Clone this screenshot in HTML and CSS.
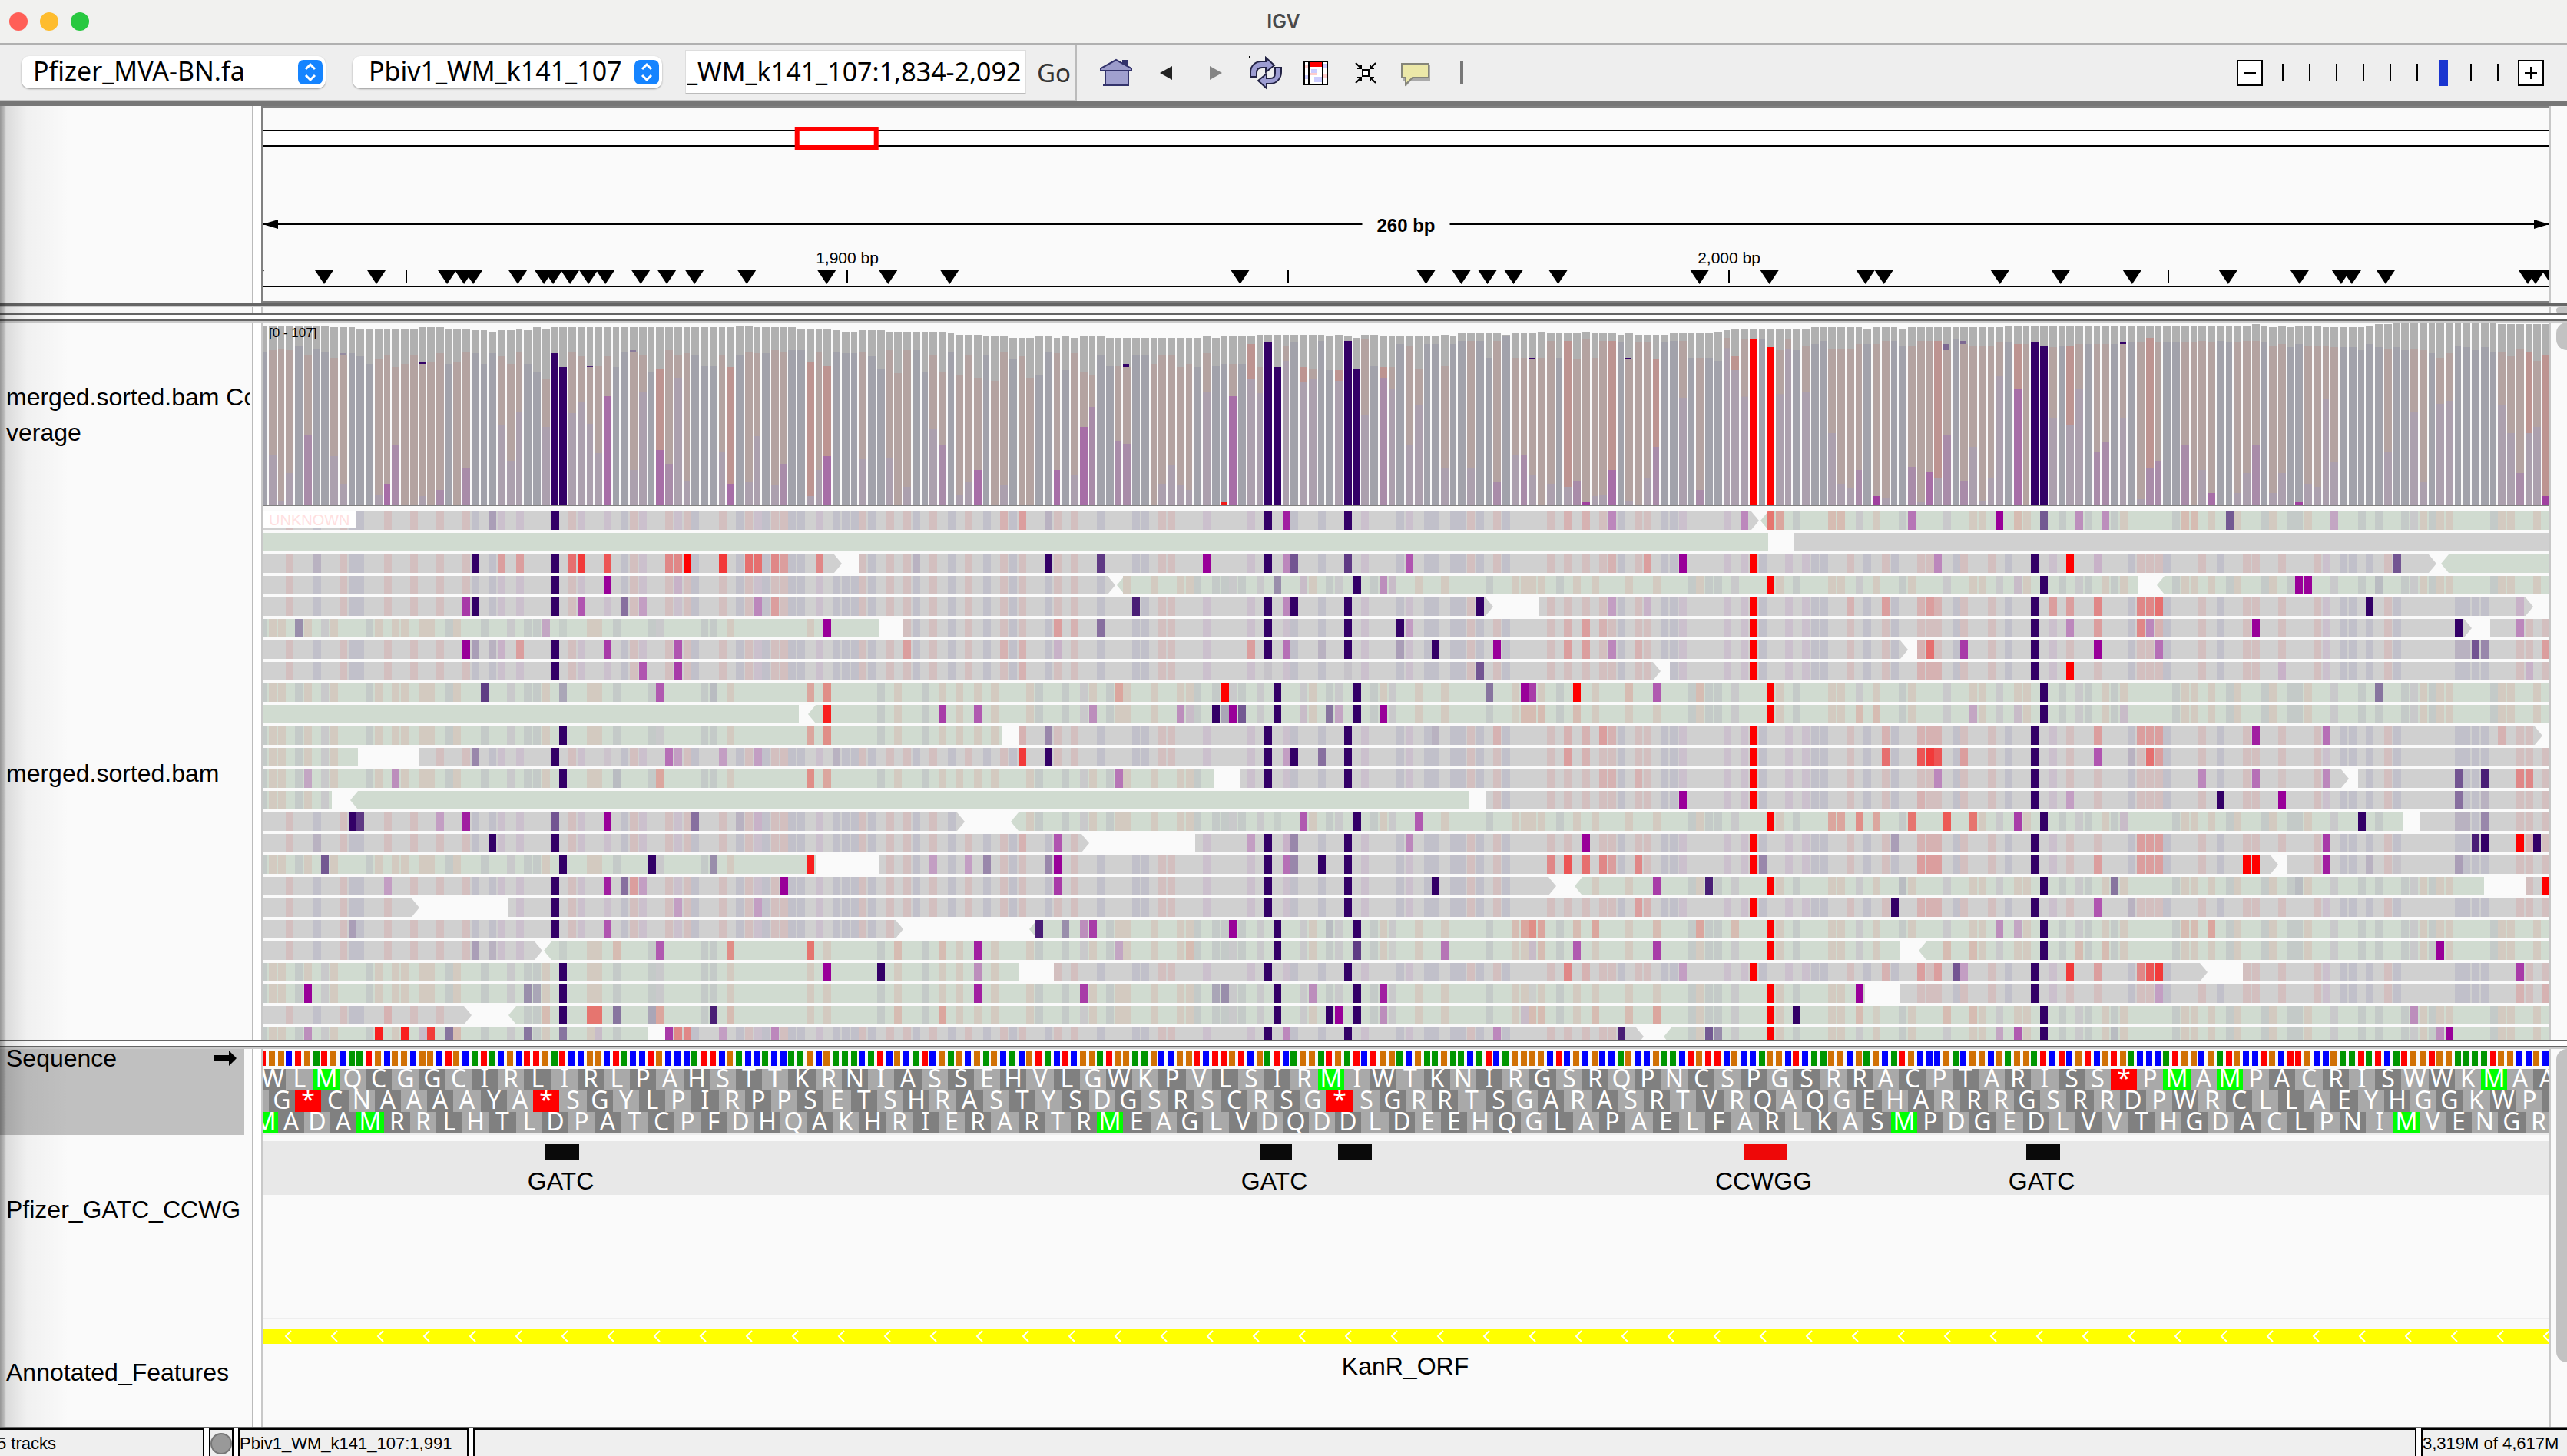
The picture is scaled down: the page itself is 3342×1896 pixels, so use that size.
FILE: index.html
```html
<!DOCTYPE html>
<html lang="en">
<head>
<meta charset="utf-8">
<title>IGV</title>
<link rel="stylesheet" href="styles.css">
</head>
<body>
<header class="titlebar">
  <div class="lights"><span class="light red"></span><span class="light amber"></span><span class="light green"></span></div>
  <h1 class="title">IGV</h1>
</header>

<nav class="toolbar">
  <div class="locus-bar">
    <div class="picker genome">
      <select aria-label="Genome"><option>Pfizer_MVA-BN.fa</option></select>
      <svg class="stepper" viewBox="0 0 32 32"><rect width="32" height="32" rx="7" fill="#1584ff"/><path d="M10 12l6-6 6 6M10 20l6 6 6-6" fill="none" stroke="#fff" stroke-width="3"/></svg>
    </div>
    <div class="picker chromosome">
      <select aria-label="Chromosome"><option>Pbiv1_WM_k141_107</option></select>
      <svg class="stepper" viewBox="0 0 32 32"><rect width="32" height="32" rx="7" fill="#1584ff"/><path d="M10 12l6-6 6 6M10 20l6 6 6-6" fill="none" stroke="#fff" stroke-width="3"/></svg>
    </div>
    <input class="locus" id="locus" type="text" aria-label="Locus" value="Pbiv1_WM_k141_107:1,834-2,092">
    <button class="go" type="button">Go</button>
  </div>
  <div class="tools">
    <button class="tool" type="button" aria-label="Home"><svg width="44" height="44" viewBox="0 0 44 44"><path d="M30 5h7v11h-7z" fill="#33336b"/><path d="M8 19h30v19H8z" fill="#a0a0cf" stroke="#33336b" stroke-width="2"/><path d="M22 5L2 16v3h40v-3z" fill="#9c9cca" stroke="#33336b" stroke-width="2"/><path d="M5 38h34" stroke="#33336b" stroke-width="2"/></svg></button>
    <button class="tool" type="button" aria-label="Back"><svg width="44" height="44" viewBox="0 0 44 44"><path d="M14 22l16-9v18z" fill="#222"/></svg></button>
    <button class="tool" type="button" aria-label="Forward"><svg width="44" height="44" viewBox="0 0 44 44"><path d="M30 22l-16-9v18z" fill="#858585"/></svg></button>
    <button class="tool" type="button" aria-label="Refresh"><svg width="44" height="44" viewBox="0 0 44 44"><g fill="#9d9dd2" stroke="#222244" stroke-width="2"><path d="M2 27v-6C2 12 9 7 16 7h6V2l11 10-11 9v-6h-5c-5 0-7 3-7 7v5z"/><path d="M42 15v6c0 9-7 15-14 15h-5v6L12 32l11-9v6h5c4 0 6-3 6-7v-7z"/></g><path d="M0 0h2v2H0z"/></svg></button>
    <button class="tool" type="button" aria-label="Region of interest"><svg width="44" height="44" viewBox="0 0 44 44"><path d="M7 7h30v30H7z" fill="#fff"/><path d="M8 12h5v4H8zM15 22h8v3h-8zM31 24h5v4h-5z" fill="#fcc"/><path d="M16 17h8v5h-8zM20 27h10v7H20zM31 10h5v5h-5zM8 25h5v5H8z" fill="#ccf"/><path d="M14 8h16v6H14z" fill="red"/><path d="M7 7h30v30H7zM13 7v30M31 7v30" fill="none" stroke="#000" stroke-width="2"/></svg></button>
    <button class="tool" type="button" aria-label="Fit to window"><svg width="44" height="44" viewBox="0 0 44 44"><g fill="none" stroke="#000" stroke-width="2"><path d="M18 18h8v8h-8z" fill="#fff"/><path d="M9 9l7 7m0-5v5h-5M35 9l-7 7m0-5v5h5M9 35l7-7m0 5v-5h-5M35 35l-7-7m0 5v-5h5"/></g></svg></button>
    <button class="tool" type="button" aria-label="Popup text"><svg width="44" height="44" viewBox="0 0 44 44"><path d="M6 12h35v20H16l-7 8v-8H6z" fill="#aaa"/><path d="M4 10h35v18H18l-9 9v-9H4z" fill="#ece8a8" stroke="#85857a" stroke-width="2"/></svg></button>
    <span class="tool-rule"></span>
  </div>
  <div class="zoomer">
    <button class="zoom-btn" type="button" aria-label="Zoom out"><svg width="34" height="34" viewBox="0 0 34 34"><path d="M1 1h32v32H1z" fill="#fff" stroke="#000" stroke-width="2"/><path d="M9 17h16" stroke="#000" stroke-width="2"/></svg></button>
    <input class="zoom-range" type="range" min="0" max="8" value="6" aria-label="Zoom level">
    <button class="zoom-btn" type="button" aria-label="Zoom in"><svg width="34" height="34" viewBox="0 0 34 34"><path d="M1 1h32v32H1z" fill="#fff" stroke="#000" stroke-width="2"/><path d="M9 17h16M17 9v16" stroke="#000" stroke-width="2"/></svg></button>
  </div>
</nav>

<main class="browser">
  <section class="panel ruler-panel">
    <div class="names"></div><div class="gutter"></div>
    <svg class="track" id="ruler"></svg>
    <div class="scroll"></div>
  </section>
  <div class="sliver"><div class="names"></div><div class="gutter"></div><div></div><div class="scroll"><span class="thumb"></span></div></div>
  <div class="split"></div>
  <section class="panel data-panel">
    <div class="names">
      <div class="name coverage-name">merged.sorted.bam Co<br>verage</div>
      <div class="name reads-name">merged.sorted.bam</div>
    </div>
    <div class="gutter"></div>
    <div class="tracks">
      <svg class="track coverage" id="coverage"></svg>
      <svg class="track reads" id="reads"></svg>
    </div>
    <div class="scroll"><span class="thumb"></span></div>
  </section>
  <div class="split"></div>
  <section class="panel feature-panel">
    <div class="names">
      <div class="name sequence-name">Sequence <svg width="30" height="20" viewBox="0 0 30 20"><path d="M0 6h20V0l10 10-10 10v-6H0z"/></svg></div>
      <div class="name motif-name">Pfizer_GATC_CCWG</div>
      <div class="name orf-name">Annotated_Features</div>
    </div>
    <div class="gutter"></div>
    <div class="tracks">
      <svg class="track sequence" id="sequence"></svg>
      <svg class="track motifs" id="motifs"></svg>
      <svg class="track orf" id="orf"></svg>
    </div>
    <div class="scroll"><span class="thumb"></span></div>
  </section>
  <div class="edge-shade"></div>
</main>

<footer class="status">
  <div class="cell count">5 tracks</div>
  <div class="cell lamp"><span></span></div>
  <div class="cell position">Pbiv1_WM_k141_107:1,991</div>
  <div class="cell message"></div>
  <div class="cell memory">3,319M of 4,617M</div>
</footer>
<script src="tracks.js"></script>
</body>
</html>
```
FILE: styles.css
```css
* { box-sizing: border-box; }
html, body { height: 100%; }
body {
  margin: 0;
  display: flex;
  flex-direction: column;
  overflow: hidden;
  background: #fafafa;
  color: #000;
  font-family: "Liberation Sans", Arial, sans-serif;
}
button { border: 0; padding: 0; background: none; color: inherit; font: inherit; }

.titlebar {
  flex: none;
  height: 58px;
  display: grid;
  grid-template-columns: 1fr auto 1fr;
  align-items: center;
  background: #f1f1ef;
  border-bottom: 2px solid #b0b0b0;
}
.lights { display: flex; gap: 16px; padding-left: 12px; }
.light { width: 24px; height: 24px; border-radius: 50%; }
.red { background: #ff5f57; }
.amber { background: #febc2e; }
.green { background: #28c840; }
.title { margin: 0; font: 600 25px Inter, sans-serif; color: #4a4a4a; }

.toolbar {
  flex: none;
  height: 80px;
  display: flex;
  background: #eee;
  border-bottom: 6px solid #777;
  font-family: "Noto Sans", sans-serif;
  font-size: 34px;
}
.locus-bar {
  display: flex;
  align-items: center;
  width: 1402px;
  padding-left: 28px;
  border-right: 2px solid #bbb;
  border-bottom: 2px solid #c4c4c4;
}
.picker {
  position: relative;
  display: flex;
  align-items: center;
  height: 42px;
  border-radius: 10px;
  background: #fff;
  box-shadow: 0 1px 2px #999;
}
.picker select {
  flex: none;
  width: 100%;
  height: 56px;
  margin-bottom: 4px;
  appearance: none;
  border: 0;
  background: none;
  font: inherit;
  color: #000;
}
.genome { width: 396px; margin-right: 35px; }
.genome select { padding: 0 0 0 15px; }
.chromosome { width: 403px; margin-right: 30px; }
.chromosome select { padding: 0 0 0 21px; }
.stepper { position: absolute; right: 4px; top: 5px; width: 32px; height: 32px; pointer-events: none; }
.locus {
  width: 444px;
  height: 58px;
  border: 1px solid #ddd;
  border-bottom: 2px solid #bbb;
  padding: 0 6px 2px 2px;
  background: #fff;
  font: inherit;
  color: #000;
}
.go { margin-left: 14px; color: #333; font-size: 33px; }
.tools { display: flex; align-items: center; gap: 21px; padding-left: 29px; }
.tool { width: 44px; height: 44px; }
.tool svg { display: block; }
.tool-rule { width: 4px; height: 30px; margin-left: 15px; background: #777; }
.zoomer { display: flex; align-items: center; gap: 20px; margin-left: auto; padding-right: 30px; }
.zoom-btn { width: 34px; height: 34px; }
.zoom-btn svg { display: block; }
.zoom-range {
  appearance: none;
  width: 290px;
  height: 34px;
  margin: 0 2px 0 0;
  background: repeating-linear-gradient(90deg, #000 0 2px, transparent 2px 35px) 5px 5px / 282px 22px no-repeat;
}
.zoom-range::-webkit-slider-thumb { appearance: none; width: 12px; height: 34px; background: #1a35d0; }

.browser { position: relative; flex: none; background: #fafafa; }
.panel, .sliver { display: grid; grid-template-columns: 328px 14px 1fr 23px; }
.gutter { background: #fff; border-left: 1px solid #bbb; border-right: 2px solid #c8c8c8; }
.scroll { border-left: 2px solid #c8c8c8; padding-left: 7px; overflow: hidden; }
.thumb { display: block; width: 28px; border-radius: 14px; background: #c2c2c2; }
.track { display: block; width: 100%; }
.ruler-panel { border-bottom: 4px solid #666; }
.ruler-panel .gutter { border-right-color: #808080; }
.ruler-panel .track { height: 256px; border-top: 2px solid #808080; border-bottom: 2px solid #808080; }
.sliver { height: 10px; border-top: 2px solid #ccc; }
.sliver .thumb { height: 8px; }
.split { height: 12px; border-top: 2px solid #666; border-bottom: 2px solid #ccc; box-shadow: inset 0 -2px #666; background: #fff; }
.data-panel .coverage { height: 239px; border-bottom: 2px solid #808080; }
.data-panel .reads { height: 695px; }
.data-panel .thumb { height: 36px; }
.feature-panel .thumb { height: 408px; }
.sequence { height: 112px; }
.motifs { height: 238px; }
.orf { height: 142px; }
.names { overflow: hidden; }
.name { width: 318px; padding-left: 8px; font-size: 32px; line-height: 46px; overflow: hidden; white-space: nowrap; }
.coverage-name { width: 326px; height: 239px; padding-top: 74px; }
.reads-name { height: 695px; padding-top: 325px; }
.sequence-name { height: 112px; display: flex; justify-content: space-between; padding-right: 10px; background: #c0c0c0; line-height: 24px; overflow: visible; }
.sequence-name svg { margin-top: 2px; }
.motif-name { height: 238px; padding-top: 74px; }
.orf-name { height: 142px; padding-top: 48px; }
.edge-shade {
  position: absolute;
  inset: 0 auto 0 0;
  width: 90px;
  background: linear-gradient(90deg, #0006 0, #0004 5px, #00000020 8px, #0000000a 35px, #0000 90px);
  pointer-events: none;
}

.status {
  flex: 1;
  display: flex;
  gap: 6px;
  border-top: 2px solid #666;
  background: #fff;
  font-size: 22px;
  line-height: 36px;
  white-space: nowrap;
}
.cell { border: 2px solid #000; border-bottom: 0; background: #efefef; }
.count { width: 266px; border-left: 0; text-indent: -4px; }
.lamp { width: 32px; padding: 4px 0; }
.lamp span { display: block; height: 28px; border-radius: 14px; background: #999; border: 2px solid #777; }
.position { width: 300px; }
.message { flex: 1; }
.memory { width: 190px; border-right: 0; }

.ruler-label { font-size: 21px; text-anchor: middle; }
.span-label { font-size: 24px; font-weight: bold; text-anchor: middle; }
.range-label { font-size: 17px; }
.unknown-label { font-size: 20px; fill: #ffe0e0; }
.amino { font: 32px "Noto Sans", sans-serif; fill: #fff; text-anchor: middle; }
.feature-label { font-size: 32px; text-anchor: middle; }
```
FILE: tracks.js
```js
const BASES = 259.46;

// Two bases before the window, then the 260 shown, then two after.
const SEQ = "CA" +
  "TGGCTGATGCAATGCGGCGGCTGCATACGCTTGATCCGGCTACCTGCCCATTCGACCACCAAGCGAAACATCGCATCGAGCGAGCACGTACTCGGATGGAAGCCG" +
  "GTCTTGTCGATCAGGATGATCTGGACGAAGAACATCAGGGGCTCGCGCCAGCCGAACTGTTCGCCAGGCTCAAGGCGAGCATGCCCGACGGCGAGGATCTCGTCG" +
  "TGACCCATGGCGATGCCTGCTTGCCGAATATCATGGTGGAAAATGGCCGC" + "TT";
const base = k => SEQ[k + 2];

const AMINO = "FFLLSSSSYY**CC*WLLLLPPPPHHQQRRRRIIIMTTTTNNKKSSRRVVVVAAAADDEEGGGG";
const translate = c => AMINO["TCAG".indexOf(c[0]) * 16 + "TCAG".indexOf(c[1]) * 4 + "TCAG".indexOf(c[2])];

// [first column, empty space above the bar]
const DEPTH = [[0,2],[8,3],[11,4],[18,3],[21,4],[24,5],[26,6],[27,5],[29,4],[30,5],[31,3],[32,4],[33,3],[54,2],[56,3],[61,4],[65,5],[66,6],[68,5],[71,6],[78,7],[79,8],[82,9],[85,10],[88,9],[90,10],[91,9],[92,10],[93,9],[96,10],[107,9],[108,10],[109,9],[113,8],[121,9],[122,8],[123,9],[124,10],[125,8],[127,9],[134,8],[135,9],[136,7],[141,8],[142,7],[145,6],[146,7],[150,6],[151,7],[154,8],[155,7],[156,8],[160,7],[165,6],[166,5],[167,4],[176,3],[182,4],[183,3],[186,4],[187,3],[198,2],[226,1],[227,2],[228,3],[229,2],[230,3],[231,2],[234,3],[239,2],[240,1],[242,0],[254,1]];

const CALLED = [174,168,162,168,150,186,162,174,198,186,180,192,222,204,186,234,222,186,222,216,180,222,216,174,180,222,180,192,222,174,222,252,282,180,234,174,192,234,228,192,234,174,174,186,252,240,168,186,180,186,228,228,186,234,186,174,180,180,168,174,168,168,216,174,228,174,180,180,174,192,240,168,258,168,168,252,186,252,174,264,186,276,186,288,174,204,
192,276,264,174,180,246,180,252,264,186,228,228,234,186,186,222,186,186,234,222,234,180,228,222,222,222,144,234,138,234,150,138,234,240,132,246,246,132,240,126,228,234,234,144,150,240,144,144,228,144,132,132,132,198,132,114,198,198,204,198,132,198,132,204,126,198,132,132,138,204,138,138,204,138,132,132,198,198,198,210,120,192,126,126,126,156,168,126,
168,150,144,132,162,162,162,144,144,144,132,132,150,150,132,132,132,168,126,144,150,150,150,138,138,144,144,138,150,156,150,150,144,144,144,144,144,144,138,138,120,138,138,138,138,138,132,138,132,138,138,132,132,138,150,144,156,144,150,150,150,156,156,156,168,144,156,162,156,168,162,168,180,198,180,150,156,168,156,174,174,192,162,174,210,186];

const SECOND = "1:576 2:756 3:648 5:498m 8:582 9:690 13:732 14:690s 15:540m 18:738 20:714m 23:630m 27:462 28:600 29:408 32:468 35:414 36:372 37:456 38:570 39:348s 42:636 43:330 45:558s 46:612m 47:276 48:680 52:564 53:690s 55:684 56:504 58:696 59:612m 62:738 63:636 64:582s 68:594 71:588 73:702 76:474 77:540m 79:732 80:684 81:636s 84:696 " +
"90:636s 92:654 93:468s 94:390m 97:522m 98:534m 102:690 103:618 104:696 105:714 107:330 110:348s 112:282 113:336 116:210 118:294 119:282 122:288 125:420 127:276m 128:318 130:540 131:384 134:630 137:630 140:684m 142:576 143:576m 144:654 146:690 148:702 149:678m 150:762x 109:762r 151:738 152:732 153:636s 155:756 157:666 158:546m 161:354 163:714m 166:160 167:246 168:350 172:340 173:165 " +
"175:330 178:492 179:690 180:708 181:636m 183:738x 184:744 187:624m 188:762 189:642s 190:666 191:498m 193:678m 194:546 195:756 196:666 197:270 199:318s 203:432 205:462 206:318 208:564m 209:528m 211:432 213:750 214:630m 215:600m 218:540m 220:636 221:726s 224:726 225:648 226:540m 228:726 229:648 231:762x 232:690 233:702 234:360 235:606 241:564 244:408 245:684 247:378 248:366 254:384 255:492 256:648m 257:492 258:468 259:738x";
const TINT = { "": "#aca0ae", m: "#a98ca9", s: "#a76ea7", x: "#a040a0", r: "#f01818" };
const WARM = new Set([45, 53, 62, 64, 112, 118, 122, 127, 148, 153, 158, 167, 190, 199, 205, 214, 257, 259]);
const CAPS = [[18,216,1,1],[37,228,1,.8],[98,222,2,1],[144,198,1,1],[155,198,1,1],[191,144,4,.4],[193,132,2,.4],[211,138,1,1],[42,168,1,.3],[9,180,1,.2]];

// Reads: strand, start, end, "a" for an arrow tip, "n" for no calls; then column, probability class, strength.
const READS = [
["+0,170,a -170.3,260,a", "26P3 84R2 86R3 89P2 116M8 148R2 150R2 153M4 168M4 171R5 172R3 187M5 178R2 179R2 197M9 199R2 202P6 206M4 209M4 218R2 219R2 223P6 235M3"],
["-0,171.2,n +174.1,260,n", ""],
["+0,66,a +68.1,247,a -247.4,260,an", "6P2 24P9 27R3 29R3 35R5 36R7 39R6 46R4 47R4 48R9 52R7 55R5 56R5 58R4 59R3 63R4 74P2 89P9 95P7 107M9 116M4 117P6 123P7 130M6 153R2 157R3 161M9 190M4 205R9 208M2 242P6"],
["+0,97.1,a -97.2,213.1,a -215.3,260,a", "39M9 47M2 115P4 118M2 127M4 128M2 199M2 231M9 232M9 240P2"],
["+0,140,a +145.2,258,a", "23M7 24P9 36M6 41P5 43M3 56M4 58R3 99P8 116M4 117P9 138P9 153M3 157M2 180R2 184R3 188R2 189R3 190R2 203R3 205R3 208R4 213R4 214R4 215R5 239P9 256M2"],
["-0,70.2 +73,251,a +253.1,260", "4P4 32M3 34P1 64M9 90R3 92R2 95P5 129P9 130M3 148R2 150R3 152R2 205M4 208R3 213R4 214M4 215R2 226M9 249P9 256M4"],
["+0,187,a +188,260", "23M9 24P3 26P2 27M2 29R3 39M7 47M6 73R3 84R2 86R2 90M2 112R3 116M5 120P2 129P3 133P9 140M9 148R3 150R3 153M4 156R2 188R2 189R5 193M7 208M9 215M5 249P2 250P2 251P6 252P4 259R3"],
["+0,159,a +160,260", "43M6 47M7 86R2 114P1 123P1 138P6 188R2 189R2 190R2 205R9 229M2 257M2"],
["-0,260", "25P7 34P3 45M6 51P2 62R3 64R4 97R3 109R9 139P5 143M9 144M7 149R9 155R2 158M6 163R2 240P5"],
["-0,61.1,n -62.2,260,a", "64R8 77M7 81M6 94M4 104M4 105M2 108P9 109P3 110M9 111P6 118M2 121P5 122M3 127M9 142R1 143R2 144R2 145R2 149R2 181R2 183R2 194M3 199M2 211M2"],
["-0,84.1 +86.1,259,a", "62R3 64R4 86R2 89P4 133P2 140R2 148R2 150R2 152R3 153R2 184R2 188R2 189R2 190R2 208R3 213R3 214R3 215R3 226M8 234M5 254R2"],
["-0,11.1 +18.1,260", "24P4 39M1 46M5 47M3 52M3 56M3 65P2 86R7 89P9 116M3 117P9 120P5 148R3 150R2 184R5 188R6 189R7 190R6 193R3 208M6 212P2 214R5 215R3"],
["-0,108.2 +111.1,237,a +238.1,260", "5M3 15M4 40P2 45R3 62R4 64R3 97M5 152R2 153R2 156R2 190M4 220M4 226M5 229R1 234M4 249P6 252P8 256R4 257R4"],
["-0,8.1 -10.2,137.2,an +139,260", "161M9 188R2 205M3 222P9 229M9 249P5 252P2"],
["+0,80,a -85.2,243.1,a +245.1,260", "10P9 11P7 20M3 23M8 33P6 39M9 49P5 54P2 56M2 115P1 118M6 131M6 178R3 179R3 181R4 183R3 187R5 191R6 194R5 199M7 211M2 238P9 249P2 250P2 252P4"],
["+0,94,a +106.1,260", "6P2 26P9 86R2 90M6 112M3 116M2 117P4 130M4 150M9 185P3 188R2 189R2 190R2 213R3 214R3 215R3 234M7 251P8 252P9 256R9 257R2 258P9"],
["-0,63.1 +70.2,229,a +230.1,260", "7P6 44P9 51P4 62R8 76M3 80M3 82P4 89P4 90M9 116M5 117P4 120P9 146R4 148R6 150R5 152R4 153R3 156R4 170P4 188R3 189R3 190R3 208R3 213R3 214R3 215R3 225R9 226R9 234M8 239P2 242P1 249P3"],
["+0,147,a -149.2,252.3,a +257.1,260", "14M3 39M8 41P5 42R3 43M3 59M9 90M7 133P9 158M7 164P8 186P2 210P5 231P2 259R9"],
["+0,18,a +28.2,260", "47M3 56M3 156R3 157R2 185P9 188R2 189R2 190R2 208M6 212P2"],
["+0,73,a -87.3,260,a", "10P3 39M6 88P8 91P4 93M4 94M7 110M9 121P2 142R2 143R3 144R4 145R3 149R2 151R3 158R2 163R3 167R2 197M4 199M3 218R2 219R2 221R3"],
["+0,32,a -32.2,186.1,a -188.2,260,a", "24P3 26P2 34P1 40R2 45M6 53R4 62R5 72R2 77R2 81M8 97M3 105R2 124P7 128M1 134M5 144M2 145R2 149M6 158M7 191R2 194R2 206R2 209R2 247M9"],
["-0,86.1 +90.1,221,a +225.1,260", "64M9 70P9 81M4 148R4 150R2 161M3 184R2 188R3 190R3 192P6 193M3 205R7 208R3 213R4 214R6 215R7 256M7"],
["-0,182.1 +186.1,260", "5M9 30P4 31P3 81M8 93M7 108P3 109P4 119M4 127M8 144M1 181M9 215M3 256R2 259R2"],
["+0,24,a -28.2,260,a", "14R2 32R2 37R5 38R5 40P5 44P3 45R3 51P8 53R2 72R2 77R3 121P9 122M9 127M4 143M2 144R2 145R2 151R2 155R2 158R3 174P9 181R2 183R1 191R2 194R2 244M4"],
["-0,44 +45.9,157,a -159.3,260,a", "5M4 13R8 16R8 18M2 19R7 21P5 22R2 30P5 34P5 38M2 46M7 47R4 48R4 52M3 58M4 116M4 140M4 154P8 164P6 165P4 197M3 199M6 210P2 247M4 248M9"]
];
const CALL = { P: "#330067", M: "#990099", R: "#ff0000" };
const HOT = { "+": { 33: "P9", 114: "P9", 123: "P9", 169: "R9", 201: "P9" }, "-": { 34: "P9", 115: "P9", 124: "P9", 171: "R9", 202: "P9" } };
const FAINT = { "+": { A: "#c1c0ca", C: "#d3bfbf" }, "-": { T: "#c4cac8", G: "#d3cac0" } };
const LILAC = new Set([27, 29, 36, 39, 43, 47, 56, 63, 107, 112, 116, 125, 130, 161, 166, 168, 173, 175, 203, 234]);
const ASHEN = new Set([7, 28, 45, 93, 110, 113, 118, 122, 128, 167, 181, 191, 197, 206, 216, 235, 244]);

const rect = (x, y, w, h, fill, o) => `<rect x="${x}" y="${y}" width="${w}" height="${h}" fill="${fill}"${o ? ` opacity="${o}"` : ""}/>`;
const text = (x, y, cls, s) => `<text x="${x}" y="${y}" class="${cls}">${s}</text>`;
const el = id => document.getElementById(id);

function draw() {
  const W = el("coverage").getBoundingClientRect().width;
  const u = W / BASES;
  // Column edges snap to even pixels so that every gap is the same width.
  const X = k => 2 * Math.round((k * u - 3.5) / 2);
  const tick = 10;
  let s = "";

  // Ruler
  s += rect(1, 30, W - 2, 20, "#fff") + rect(0, 29, W, 2, "#000") + rect(0, 49, W, 2, "#000") + rect(0, 29, 1, 22, "#000") + rect(W - 1, 29, 1, 22, "#000");
  s += `<rect x="${W * .2337}" y="28" width="103" height="24" fill="#fff" stroke="red" stroke-width="6"/>`;
  s += rect(0, 151, W / 2 - 57, 2, "#000") + rect(W / 2 + 57, 151, W / 2 - 57, 2, "#000");
  s += `<path d="M0 152l20-6v12zM${W} 152l-20-6v12z"/>` + text(W / 2, 162, "span-label", "260 bp");
  for (const p of [-10,80,148,240,262,274,332,366,378,400,424,446,492,526,562,630,734,814,894,1272,1514,1560,1594,1628,1686,1870,1961,2086,2110,2261,2340,2433,2558,2651,2705,2719,2763,2948,2958,2978]) {
    const x = p / 2976 * W;
    s += `<path d="M${x - 12} 212h24l-12 18z"/>`;
  }
  for (const k of [16, 66, 116, 166, 216]) s += rect(X(k) + 6, 211, 2, 18, "#000");
  s += text(X(66) + 7, 203, "ruler-label", "1,900 bp") + text(X(166) + 7, 203, "ruler-label", "2,000 bp");
  s += rect(0, 232, W, 2, "#000");
  el("ruler").innerHTML = s;

  // Coverage
  s = "";
  const second = {};
  for (const t of SECOND.split(" ")) { const m = t.match(/(\d+):(\d+)(\w?)/); second[m[1]] = [+m[2], m[3]]; }
  let run = 0;
  for (let k = 0; k < 260; k++) {
    while (run + 1 < DEPTH.length && DEPTH[run + 1][0] <= k) run++;
    const top = DEPTH[run][1] * 2, y = (CALLED[k] - 60) / 3, x = X(k), bar = X(k + 1) - x - 2;
    const hot = HOT["+"][k] || HOT["-"][k];
    s += rect(x, top, bar, 237 - top, "#b0b0b0");
    const cg = "CG".includes(base(k));
    s += rect(x, y, bar, 237 - y, hot ? CALL[hot[0]] : cg ? (WARM.has(k) ? "#bd9491" : "#b4a3a1") : "#a2a2ab");
    if (second[k] && !hot) { const z = (second[k][0] - 60) / 3; s += rect(x, z, bar, 237 - z, TINT[second[k][1]]); }
  }
  for (const [k, y, h, o] of CAPS) s += rect(X(k), (y - 60) / 3, 8, h * 2, CALL.P, o);
  s += text(8, 19, "range-label", "[0 - 107]");
  el("coverage").innerHTML = s;

  // Alignments
  s = "";
  READS.forEach(([segs, calls], row) => {
    const y = 7 + row * 28;
    const own = {};
    for (const c of calls.split(" ")) { const m = c.match(/(\d+)(\w\d)/); if (m) own[m[1]] = m[2]; }
    for (const seg of segs.split(" ")) {
      const strand = seg[0];
      const [a, b, flags = ""] = seg.slice(1).split(",");
      const x0 = Math.max(0, X(+a)), x1 = Math.min(W, X(+b));
      const l = strand === "-" && flags.includes("a") ? 10 : 0;
      const r = strand === "+" && flags.includes("a") ? 10 : 0;
      s += `<path d="M${x0 + l} ${y}H${x1 - r}L${x1} ${y + 12}L${x1 - r} ${y + 24}H${x0 + l}L${x0} ${y + 12}z" fill="${strand === "+" ? "#d0d0d0" : "#d0dbd0"}"/>`;
      if (flags.includes("n")) continue;
      for (let k = Math.floor(+a + .3); k < Math.floor(+b + .1) && k < 260; k++) {
        if ((l && k < +a + .4) || (r && k > +b - 1.2)) continue;
        const c = own[k] || HOT[strand][k];
        if (c) { s += rect(X(k), y, tick, 24, CALL[c[0]], (+c[1] / 9) ** 1.3); continue; }
        let f = FAINT[strand][base(k)];
        if (!f) continue;
        if (strand === "+" && LILAC.has(k)) f = "#cbc0cd";
        if (strand === "-" && ASHEN.has(k)) f = "#c9c9cb";
        s += rect(X(k), y, tick, 24, f);
      }
    }
  });
  s += rect(0, 7, 122, 22, "#fff") + text(8, 25, "unknown-label", "UNKNOWN");
  el("reads").innerHTML = s;

  // Sequence and its three reading frames
  s = "";
  const dye = { A: "#009600", C: "#0000ff", G: "#d17105", T: "#ff0000" };
  for (let k = 0; k < 260; k++) s += rect(X(k), 2, 8, 20, dye[base(k)]);
  [[0, 0], [-2, 1], [-1, 0]].forEach(([start, odd], f) => {
    for (let k = start, i = odd; k < 260; k += 3, i++) {
      const aa = translate(SEQ.slice(k + 2, k + 5).padEnd(3, "T"));
      const x = X(k), w = X(k + 3) - x, y = 26 + f * 28;
      const dark = f === 2 ? i % 2 : !(i % 2);
      s += rect(x, y, w, 28, aa === "M" ? "#00ff00" : aa === "*" ? "#ff0000" : dark ? "#808080" : "#a9a9a9");
      s += text(x + w / 2, y + 24, "amino", aa);
    }
  });
  s += rect(0, 110, W, 2, "#eee");
  el("sequence").innerHTML = s;

  // Motifs
  s = rect(0, 8, W, 70, "#e8e8e8");
  for (const [k, n, name, fill] of [[32, 4, "GATC", "#0a0a0a"], [113, 4, "GATC", "#0a0a0a"], [122, 4, "", "#0a0a0a"], [168, 5, "CCWGG", "#ee0808"], [200, 4, "GATC", "#0a0a0a"]]) {
    s += rect(X(k) + 4, 12, X(k + n) - X(k) - 2, 20, fill);
    if (name) s += text((X(k) + X(k + n)) / 2 + 1, 71, "feature-label", name);
  }
  el("motifs").innerHTML = s;

  // Annotated features
  s = rect(0, 0, W, 2, "#eee") + rect(0, 14, W, 20, "#ff0");
  for (let x = 29; x < W; x += 60) s += `<path d="M${x + 8} 17l-7 7 7 7" fill="none" stroke="#fff" stroke-width="2"/>`;
  s += text(W / 2 - 1, 74, "feature-label", "KanR_ORF");
  el("orf").innerHTML = s;
}

draw();
addEventListener("resize", draw);
el("locus").scrollLeft = el("locus").scrollWidth;
```
